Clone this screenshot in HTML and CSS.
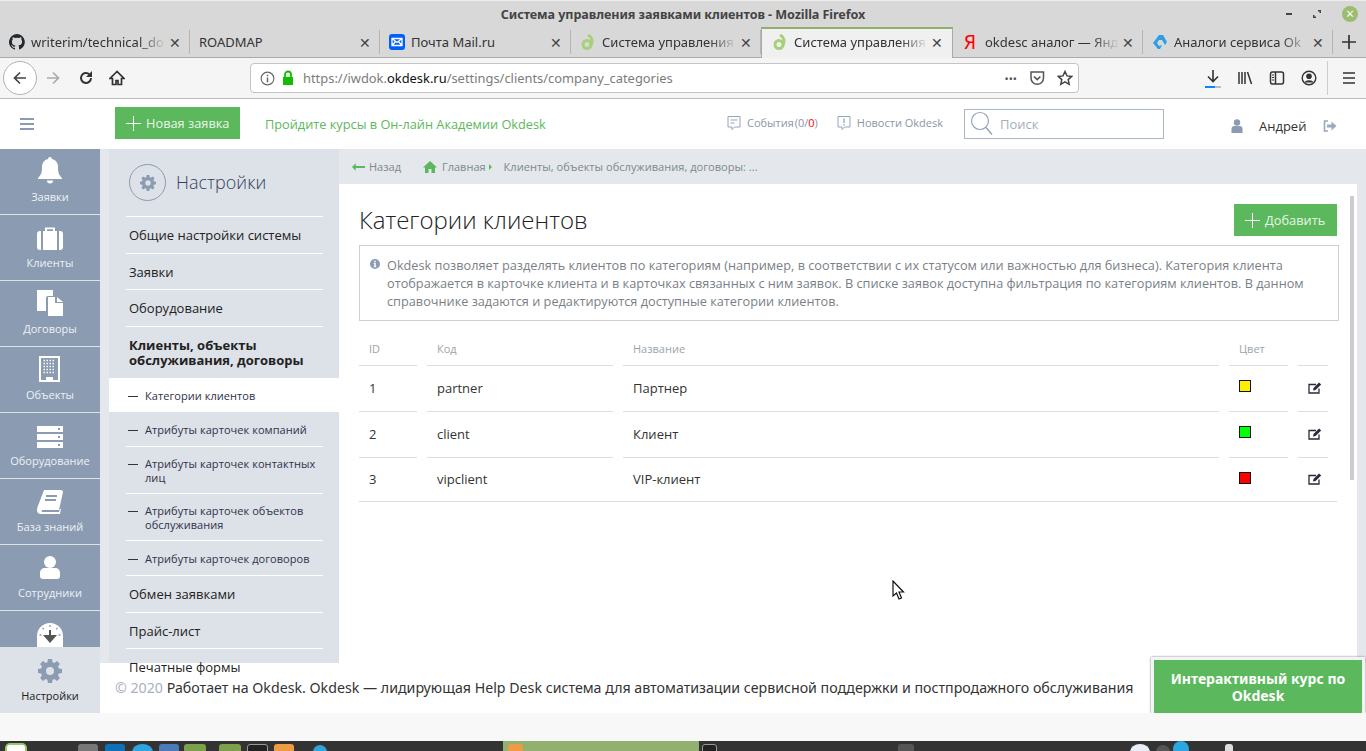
FILE: index.html
```html
<!DOCTYPE html>
<html lang="ru">
<head>
  <meta charset="UTF-8" />
  <meta name="viewport" content="width=device-width, initial-scale=1.0"/>
  <title>Система управления заявками клиентов</title>
  <link rel="stylesheet" href="styles.css">
</head>
<body>
  <svg class="defs" width="0" height="0">
    <defs>
      <g id="okdesk-logo" fill="none" stroke="#a8cf7a" stroke-width="3">
        <circle cx="7" cy="10.5" r="4"/>
        <path d="M8 1c4 2 5 6 3 10"/>
      </g>
      <path id="gear" fill="#8a9bb2" fill-rule="evenodd" d="M10 0h4l.6 3.200 1.800.8L19.100 2.100 21.900 4.900 20 7.600l.8 1.800L24 10v4l-3.200.6-.8 1.800 1.900 2.700-2.800 2.800L16.400 20l-1.800.8L14 24h-4l-.6-3.200-1.800-.8-2.700 1.900-2.800-2.800L4 16.400l-.8-1.800L0 14v-4l3.200-.6.8-1.800L2.100 4.900 4.900 2.100 7.600 4l1.800-.8zM12 8a4 4 0 1 0 0 8 4 4 0 0 0 0-8z"/>
      <g id="edit">
        <path d="M11 6.500V11H1V2.500h7" fill="none" stroke="#2a2a3a" stroke-width="1.300"/>
        <path d="M5 8.500l.5-2.500L11 .5l2.200 2L7.500 8z" fill="#2a2a3a"/>
      </g>
    </defs>
  </svg>

  <!-- browser window chrome -->
  <div class="titlebar">
    <span class="titlebar-text">Система управления заявками клиентов - Mozilla Firefox</span>
    <div class="win-buttons">
      <span class="win-min"></span>
      <svg width="10" height="10" viewBox="0 0 10 10"><path d="M1 9V6h1.500v1.500H4V9zM9 1v3H7.500V2.500H6V1z" fill="#444"/></svg>
      <span class="win-close">×</span>
    </div>
  </div>

  <div class="tabs">
    <div class="tab">
      <svg class="tab-icon" viewBox="0 0 16 16"><path fill="#24292e" d="M8 0a8 8 0 0 0-2.500 15.600c.4.100.5-.2.500-.4v-1.400c-2.200.5-2.700-1-2.700-1-.4-.9-.9-1.200-.9-1.200-.7-.5.100-.5.100-.5.800.1 1.200.8 1.200.8.700 1.200 1.900.9 2.300.7.100-.5.300-.9.500-1.100-1.800-.2-3.600-.9-3.600-4 0-.9.300-1.600.8-2.100-.1-.2-.4-1 .1-2.100 0 0 .7-.2 2.200.8a7.600 7.600 0 0 1 4 0c1.500-1 2.200-.8 2.200-.8.400 1.100.2 1.900.1 2.100.5.600.8 1.300.8 2.100 0 3.100-1.900 3.700-3.700 3.900.3.300.6.800.6 1.500v2.200c0 .2.100.5.600.4A8 8 0 0 0 8 0z"/></svg>
      <span class="tab-title">writerim/technical_do</span><span class="tab-x">✕</span>
    </div>
    <div class="tab">
      <span class="tab-title tab-plain">ROADMAP</span><span class="tab-x">✕</span>
    </div>
    <div class="tab tab-wide">
      <svg class="tab-icon" viewBox="0 0 16 16"><rect width="16" height="16" rx="3" fill="#005ff9"/><path d="M3 4.500h10v7H3zM3 4.500l5 4 5-4M3 11.500l3.500-4M13 11.500l-3.500-4" fill="none" stroke="#fff" stroke-width="1.300"/></svg>
      <span class="tab-title tab-plain">Почта Mail.ru</span><span class="tab-x">✕</span>
    </div>
    <div class="tab">
      <svg class="tab-icon" viewBox="0 0 16 16"><use href="#okdesk-logo"/></svg>
      <span class="tab-title">Система управления</span><span class="tab-x">✕</span>
    </div>
    <div class="tab tab-active">
      <svg class="tab-icon" viewBox="0 0 16 16"><use href="#okdesk-logo"/></svg>
      <span class="tab-title">Система управления</span><span class="tab-x">✕</span>
    </div>
    <div class="tab">
      <span class="tab-ya">Я</span>
      <span class="tab-title">okdesc аналог — Янд</span><span class="tab-x">✕</span>
    </div>
    <div class="tab">
      <svg class="tab-icon" viewBox="0 0 16 16"><path d="M7 1h4l4 7-2 3-3-5H7L5 9l2 3 3-1-2 4-2 0-5-6z" fill="#2c9fe5"/></svg>
      <span class="tab-title">Аналоги сервиса Ok</span><span class="tab-x">✕</span>
    </div>
    <svg class="tab-new" viewBox="0 0 14 14" width="14" height="14"><path d="M7 0v14M0 7h14" stroke="#333" stroke-width="1.700"/></svg>
  </div>

  <div class="toolbar">
    <button class="nav-back">
      <svg width="16" height="16" viewBox="0 0 16 16"><path d="M14 8H2.500M8 2.500L2.500 8 8 13.500" fill="none" stroke="#444" stroke-width="1.700"/></svg>
    </button>
    <svg class="nav-icon nav-fwd" viewBox="0 0 16 16"><path d="M2 8h11.500M8 2.500L13.500 8 8 13.500" fill="none" stroke="#aaa" stroke-width="1.700"/></svg>
    <svg class="nav-icon nav-reload" viewBox="0 0 16 16"><path d="M13 8a5 5 0 1 1-1.700-3.800" fill="none" stroke="#333" stroke-width="2"/><path d="M14 1v6H8z" fill="#333"/></svg>
    <svg class="nav-icon nav-home" viewBox="0 0 16 16"><path d="M8 1.500L1 8.500h2.500V14.500h3.500v-4h2v4h3.500V8.500H15z" fill="none" stroke="#333" stroke-width="1.700"/></svg>
    <div class="urlbar">
      <svg class="url-info" viewBox="0 0 16 16"><circle cx="8" cy="8" r="6.800" fill="none" stroke="#666" stroke-width="1.200"/><path d="M8 7v5M8 4v1.600" stroke="#666" stroke-width="1.600"/></svg>
      <svg class="url-lock" viewBox="0 0 12 16"><path d="M3 7V4.500a3 3 0 0 1 6 0V7" fill="none" stroke="#12bc00" stroke-width="1.800"/><rect x="1" y="7" width="10" height="8" fill="#12bc00"/></svg>
      <span class="url-text">https://iwdok.<b>okdesk.ru</b>/settings/clients/company_categories</span>
      <span class="url-dots">•••</span>
      <svg class="url-icon" viewBox="0 0 16 16"><path d="M2 2h12.500v6a6.250 6.250 0 0 1-12.500 0z" fill="none" stroke="#555" stroke-width="1.500"/><path d="M5 6.500l3.200 3 3.200-3" fill="none" stroke="#555" stroke-width="1.700"/></svg>
      <svg class="url-icon url-star" viewBox="0 0 16 16"><path d="M8 1.500l2 4.400 4.700.5-3.500 3.200 1 4.700L8 11.900l-4.200 2.400 1-4.700L1.300 6.400 6 5.900z" fill="none" stroke="#444" stroke-width="1.500"/></svg>
    </div>
    <div class="tool-right">
      <div class="tool-download">
        <svg viewBox="0 0 16 16" width="16" height="16"><path d="M8 1v11M3 7.500L8 12.500l5-5" fill="none" stroke="#333" stroke-width="1.600"/></svg>
        <span class="tool-progress"></span>
      </div>
      <svg class="tool-icon" viewBox="0 0 16 16"><path d="M2 2v12M5 2v12M8 2v12M10.500 2l4 12" stroke="#333" stroke-width="1.500" fill="none"/></svg>
      <svg class="tool-icon" viewBox="0 0 16 16"><rect x="1.500" y="2" width="13" height="12" rx="2" fill="none" stroke="#333" stroke-width="1.500"/><path d="M6.500 2v12" stroke="#333" stroke-width="1.500"/><path d="M3 5h2M3 7.500h2M3 10h2" stroke="#333"/></svg>
      <svg class="tool-icon" viewBox="0 0 16 16"><circle cx="8" cy="8" r="6.800" fill="none" stroke="#333" stroke-width="1.400"/><circle cx="8" cy="6.300" r="2.800" fill="#333"/><path d="M3.500 12.500c1-3 8-3 9 0z" fill="#333"/></svg>
      <span class="tool-sep"></span>
      <svg class="tool-icon tool-menu" viewBox="0 0 16 16"><path d="M2 3h12M2 8h12M2 13h12" stroke="#333" stroke-width="1.600"/></svg>
    </div>
  </div>

  <!-- okdesk page -->
  <div class="page">
    <header class="topbar">
      <div class="burger"><span></span><span></span><span></span></div>
      <a class="btn btn-new"><span class="plus"></span>Новая заявка</a>
      <a class="academy">Пройдите курсы в Он-лайн Академии Okdesk</a>
      <div class="top-links">
        <span class="top-link top-events">
          <svg viewBox="0 0 14 16" width="14" height="16"><path d="M1 1.500h12v10.500H7.500L5 14.500V12H1z" fill="none" stroke="#93a5bb"/><path d="M3.500 5h7M3.500 8h4" stroke="#93a5bb"/></svg>
          <span>События (0/<em>0</em>)</span>
        </span>
        <span class="top-link">
          <svg viewBox="0 0 14 16" width="14" height="16"><path d="M1 1.500h12v10.500H7.500L5 14.500V12H1z" fill="none" stroke="#93a5bb"/><path d="M7 3.500v4.500M7 9v1.500" stroke="#93a5bb" stroke-width="1.300"/></svg>
          <span>Новости Okdesk</span>
        </span>
      </div>
      <div class="search">
        <svg viewBox="0 0 24 26" width="24" height="26"><circle cx="10" cy="10" r="8.500" fill="none" stroke="#93a5bb" stroke-width="1.200"/><path d="M16 16.500l6 7" stroke="#93a5bb" stroke-width="1.500"/></svg>
        <span>Поиск</span>
      </div>
      <div class="user">
        <svg viewBox="0 0 12 14" width="12" height="14"><circle cx="6" cy="3.500" r="3.200" fill="#8a9bb2"/><path d="M.5 14V10a3 3 0 0 1 3-3h5a3 3 0 0 1 3 3v4z" fill="#8a9bb2"/></svg>
        <span class="user-name">Андрей</span>
        <svg viewBox="0 0 14 12" width="14" height="12"><path d="M5 1H1.500v10H5" fill="none" stroke="#9aa9bc" stroke-width="1.600"/><path d="M4 4.500h4.500V1.500L13.500 6l-5 4.500v-3H4z" fill="#9aa9bc"/></svg>
      </div>
    </header>

    <div class="workspace">
      <nav class="rail">
        <div class="rail-items">
          <a class="rail-item">
            <svg viewBox="0 0 26 28" width="26" height="28"><path d="M13 1a2 2 0 0 1 2 2c4 1 6 4 6 8 0 6 1 8 4 11v1H1v-1c3-3 4-5 4-11 0-4 2-7 6-8a2 2 0 0 1 2-2z" fill="#fff"/><path d="M10 24.500a3 3 0 0 0 6 0z" fill="#fff"/></svg>
            <span>Заявки</span>
          </a>
          <a class="rail-item">
            <svg viewBox="0 0 26 24" width="26" height="24"><path d="M0 8a3 3 0 0 1 3-3h1v19H3a3 3 0 0 1-3-3zM6 5h2V1.500h10V5h2v19H6zM10 5h6V3.300h-6zM22 5h1a3 3 0 0 1 3 3v13a3 3 0 0 1-3 3h-1z" fill="#fff"/></svg>
            <span>Клиенты</span>
          </a>
          <a class="rail-item">
            <svg viewBox="0 0 26 26" width="26" height="26"><path d="M0 0h16v6H11a2 2 0 0 0-2 2v13H0z" fill="#fff"/><path d="M11 7h7v6h8v13H11z" fill="#fff"/><path d="M20 7l6 5h-6z" fill="#fff"/></svg>
            <span>Договоры</span>
          </a>
          <a class="rail-item">
            <svg viewBox="0 0 22 26" width="22" height="26"><path fill-rule="evenodd" d="M0 0h21v26H0zM2 2v22h5v-3h7v3h5V2z" fill="#fff"/><path d="M4.500 4.500h12M4.500 7.500h12M4.500 10.500h12M4.500 13.500h12M4.500 16.500h12" stroke="#fff" stroke-width="1.500" stroke-dasharray="1.500 1.500"/></svg>
            <span>Объекты</span>
          </a>
          <a class="rail-item">
            <svg viewBox="0 0 26 22" width="26" height="22"><path fill-rule="evenodd" d="M0 0h26v6H0zM0 8h26v6H0zM0 16h26v6H0zM21 2v2h2V2zM21 10v2h2v-2zM21 18v2h2v-2z" fill="#fff"/></svg>
            <span>Оборудование</span>
          </a>
          <a class="rail-item">
            <svg viewBox="0 0 26 24" width="26" height="24"><path fill-rule="evenodd" d="M7 0h17a2 2 0 0 1 2 2l-4 18H5a2 2 0 0 0 0 2h17l1-3 1 0-1 5H4a4 4 0 0 1-4-4c0-1 .3-2 .5-3zM9 5v2h11V5zM8 9v2h11V9z" fill="#fff"/></svg>
            <span>База знаний</span>
          </a>
          <a class="rail-item">
            <svg viewBox="0 0 20 24" width="20" height="24"><circle cx="10" cy="6" r="6" fill="#fff"/><path d="M0 20v-3c0-3 2-5 5-5h10c3 0 5 2 5 5v3c0 2-1 3-3 3H3c-2 0-3-1-3-3z" fill="#fff"/></svg>
            <span>Сотрудники</span>
          </a>
          <a class="rail-item rail-gauge">
            <svg viewBox="0 0 26 24" width="26" height="24"><path d="M0 13a13 13 0 0 1 26 0v11H0z" fill="#fff"/><path d="M13 2v2M5.500 5l1.400 1.400M20.500 5l-1.400 1.400M2.500 12h2M21.500 12h2" stroke="#8a9bb2" stroke-width="1.300"/><path d="M12 7h2v5h6l-7 8-7-8h6z" fill="#555"/></svg>
          </a>
        </div>
        <a class="rail-item rail-settings">
          <svg viewBox="0 0 24 24" width="24" height="24"><use href="#gear"/></svg>
          <span>Настройки</span>
        </a>
      </nav>

      <aside class="settings">
        <div class="settings-head">
          <div class="settings-badge">
            <svg viewBox="0 0 24 24" width="16" height="16"><use href="#gear"/></svg>
          </div>
          <span class="settings-title">Настройки</span>
        </div>
        <ul class="settings-list">
          <li class="menu-item">Общие настройки системы</li>
          <li class="menu-item">Заявки</li>
          <li class="menu-item">Оборудование</li>
          <li class="menu-item menu-open">Клиенты, объекты обслуживания, договоры</li>
          <li class="sub-item sub-single sub-current">Категории клиентов</li>
          <li class="sub-item sub-single">Атрибуты карточек компаний</li>
          <li class="sub-item">Атрибуты карточек контактных лиц</li>
          <li class="sub-item">Атрибуты карточек объектов обслуживания</li>
          <li class="sub-item sub-single sub-last">Атрибуты карточек договоров</li>
          <li class="menu-item">Обмен заявками</li>
          <li class="menu-item">Прайс-лист</li>
          <li class="menu-item">Печатные формы</li>
        </ul>
      </aside>

      <main class="main">
        <div class="crumbs">
          <svg viewBox="0 0 14 8" width="13" height="8"><path d="M0 4l4-4v3h10v2H4v3z" fill="#5cb85c"/></svg>
          <span class="crumb-back">Назад</span>
          <svg class="crumb-home" viewBox="0 0 14 12" width="14" height="12"><path d="M7 0l7 6.500h-2V12H8.500V8h-3v4H2V6.500H0z" fill="#5cb85c"/></svg>
          <span>Главная</span>
          <i class="crumb-arrow"></i>
          <span class="crumb-path">Клиенты, объекты обслуживания, договоры: ...</span>
        </div>
        <div class="content">
          <div class="content-head">
            <h1>Категории клиентов</h1>
            <a class="btn btn-add"><span class="plus"></span>Добавить</a>
          </div>
          <div class="note">
            <svg viewBox="0 0 10 10" width="10" height="10"><path fill-rule="evenodd" d="M5 0a5 5 0 1 1 0 10A5 5 0 0 1 5 0zM4.200 1.700v1.500h1.600V1.700zM3.700 4v1h.6v2.300h-.6v1h2.600v-1h-.5V4z" fill="#8a9bb2"/></svg>
            <p>Okdesk позволяет разделять клиентов по категориям (например, в соответствии с их статусом или важностью для бизнеса). Категория клиента отображается в карточке клиента и в карточках связанных с ним заявок. В списке заявок доступна фильтрация по категориям клиентов. В данном справочнике задаются и редактируются доступные категории клиентов.</p>
          </div>
          <div class="grid-wrap">
            <table class="grid">
              <thead>
                <tr><th class="col-id">ID</th><th class="col-code">Код</th><th class="col-name">Название</th><th class="col-color">Цвет</th><th class="col-edit"></th></tr>
              </thead>
              <tbody>
                <tr>
                  <td>1</td><td>partner</td><td>Партнер</td>
                  <td><span class="swatch swatch-yellow"></span></td>
                  <td><svg class="edit" viewBox="0 0 14 12"><use href="#edit"/></svg></td>
                </tr>
                <tr>
                  <td>2</td><td>client</td><td>Клиент</td>
                  <td><span class="swatch swatch-green"></span></td>
                  <td><svg class="edit" viewBox="0 0 14 12"><use href="#edit"/></svg></td>
                </tr>
                <tr class="row-last">
                  <td>3</td><td>vipclient</td><td>VIP-клиент</td>
                  <td><span class="swatch swatch-red"></span></td>
                  <td><svg class="edit" viewBox="0 0 14 12"><use href="#edit"/></svg></td>
                </tr>
              </tbody>
            </table>
          </div>
        </div>
        <div class="scroller"><span></span></div>
      </main>

      <footer class="foot">© 2020 <span>Работает на Okdesk. Okdesk — лидирующая Help Desk система для автоматизации сервисной поддержки и постпродажного обслуживания</span></footer>
    </div>

    <a class="course">Интерактивный курс по Okdesk</a>

    <svg class="cursor" viewBox="0 0 14 20" width="14" height="20"><path d="M1 1v15l3.500-3 2.500 6 2.500-1-2.500-6h4.500z" fill="#fff" stroke="#111" stroke-width="1.200"/></svg>
  </div>

  <div class="strip"></div>

  <div class="taskbar">
    <span class="task-mint"></span>
    <span class="task-app task-gray"></span>
    <span class="task-app task-vscode"></span>
    <span class="task-app task-tg"></span>
    <span class="task-app task-blue"></span>
    <span class="task-app task-greenbox"></span>
    <span class="task-app task-folder"></span>
    <span class="task-app task-term"></span>
    <span class="task-app task-orange"></span>
    <span class="task-dot task-tgwin"></span>
    <div class="task-window"><span class="task-app task-orange"></span></div>
    <span class="task-app task-term task-termwin"></span>
    <span class="task-app task-fox"></span>
    <span class="task-app task-shield"></span>
    <span class="task-dot task-graydot"></span>
    <span class="task-dot task-bluedot"></span>
    <span class="task-app task-batt"></span>
  </div>
</body>
</html>
```

FILE: styles.css
```css
* {
  box-sizing: border-box;
}
html, body {
  margin: 0;
  height: 751px;
  overflow: hidden;
}
body {
  font-family: 'Open Sans', sans-serif;
  background: #f8f8f8;
  color: #333;
}
.defs {
  display: block;
  height: 0;
}

/* browser chrome */
.titlebar {
  height: 27px;
  background: #d8d8d8;
  display: flex;
  align-items: center;
  justify-content: center;
  position: relative;
  border-top: 1px solid #eee;
}
.titlebar-text {
  font-family: 'Noto Sans', sans-serif;
  font-size: 12.6px;
  font-weight: 700;
  color: #444;
  letter-spacing: -0.08px;
}
.win-buttons {
  position: absolute;
  right: 8px;
  top: 0;
  height: 26px;
  display: flex;
  align-items: center;
  gap: 20px;
}
.win-min {
  width: 6px;
  height: 2px;
  background: #444;
}
.win-close {
  width: 16px;
  height: 16px;
  border-radius: 50%;
  background: #9cbd6f;
  color: #fff;
  font-size: 14px;
  line-height: 16px;
  text-align: center;
}
.tabs {
  height: 31px;
  background: #d8d8d8;
  display: flex;
  align-items: flex-start;
  border-bottom: 1px solid #aaa;
  font-family: 'Noto Sans', sans-serif;
  font-size: 13px;
  color: #333;
}
.tab {
  flex: none;
  width: 190px;
  height: 30px;
  display: flex;
  align-items: center;
  padding: 0 6px 0 9px;
  position: relative;
}
.tab-wide {
  width: 191px;
}
.tab::after {
  content: "";
  position: absolute;
  right: 0;
  top: 3px;
  bottom: 3px;
  width: 1px;
  background: #b4b4b4;
}
.tab-active {
  width: 192px;
  height: 31px;
  padding-left: 10px;
  padding-bottom: 3px;
  background: #f0f0f0;
  border-top: 2px solid #8fb069;
  border-left: 1px solid #aaa;
  border-right: 1px solid #aaa;
}
.tab-active::after {
  display: none;
}
.tab-icon {
  width: 16px;
  height: 16px;
  flex: none;
  margin-right: 6px;
}
.tab-title {
  flex: 1;
  overflow: hidden;
  white-space: nowrap;
  -webkit-mask-image: linear-gradient(to right, #000 80%, transparent 100%);
  mask-image: linear-gradient(to right, #000 80%, transparent 100%);
}
.tab-plain {
  -webkit-mask-image: none;
  mask-image: none;
}
.tab-x {
  flex: none;
  width: 18px;
  text-align: center;
  font-size: 14px;
  color: #444;
}
.tab-ya {
  flex: none;
  width: 12px;
  margin: 0 9px 0 2px;
  color: #f00;
  font-size: 19px;
  line-height: 1;
  text-align: center;
}
.tab-new {
  flex: none;
  margin: 8px 0 0 9px;
}
.toolbar {
  height: 41px;
  background: #f5f5f5;
  border-bottom: 1px solid #bbb;
  display: flex;
  align-items: center;
  padding-left: 3px;
}
.nav-back {
  width: 34px;
  height: 34px;
  flex: none;
  border: 1px solid #b4b4b4;
  border-radius: 50%;
  background: #fff;
  padding: 0;
  display: flex;
  align-items: center;
  justify-content: center;
}
.nav-icon {
  width: 16px;
  height: 16px;
  flex: none;
}
.nav-fwd {
  margin-left: 8px;
}
.nav-reload {
  margin-left: 17px;
}
.nav-home {
  margin-left: 15px;
}
.urlbar {
  width: 829px;
  height: 30px;
  margin-left: 125px;
  background: #fff;
  border: 1px solid #c4c4c4;
  border-radius: 4px;
  display: flex;
  align-items: center;
  padding: 0 5px 0 9px;
  font-family: 'Noto Sans', sans-serif;
  font-size: 12.9px;
  color: #7c7c7c;
}
.url-info {
  width: 15px;
  height: 15px;
  flex: none;
}
.url-lock {
  width: 12px;
  height: 16px;
  margin-left: 7px;
  flex: none;
}
.url-text {
  margin-left: 9px;
  flex: 1;
  white-space: nowrap;
}
.url-text b {
  font-weight: 400;
  color: #111;
}
.url-dots {
  font-size: 11px;
  color: #555;
  margin-right: 12px;
}
.url-icon {
  width: 16px;
  height: 16px;
  flex: none;
}
.url-star {
  margin-left: 12px;
}
.tool-right {
  flex: 1;
  display: flex;
  align-items: center;
  padding-left: 126px;
  gap: 16px;
  height: 100%;
}
.tool-download {
  width: 16px;
  height: 20px;
  position: relative;
}
.tool-progress {
  position: absolute;
  left: 0;
  bottom: 0;
  width: 16px;
  height: 2px;
  background: linear-gradient(to right, #0a84ff 65%, #bbb 65%);
}
.tool-icon {
  width: 16px;
  height: 16px;
  flex: none;
}
.tool-sep {
  width: 1px;
  height: 34px;
  background: #ccc;
  margin-left: -6px;
}
.tool-menu {
  margin-left: -3px;
}

/* page */
.page {
  height: 614px;
  position: relative;
  overflow: hidden;
  background: #fff;
}
.topbar {
  height: 50px;
  display: flex;
  align-items: center;
  background: #fff;
}
.burger {
  width: 14px;
  margin-left: 20px;
  display: flex;
  flex-direction: column;
  gap: 3px;
}
.burger span {
  height: 2px;
  background: #8a9bb2;
}
.btn {
  display: flex;
  align-items: center;
  height: 32px;
  background: #5cb85c;
  color: #e9f6e9;
  font-size: 12.8px;
  padding: 0 11px;
  white-space: nowrap;
}
.btn .plus {
  flex: none;
  width: 15px;
  height: 15px;
  margin-right: 5px;
  background:
    linear-gradient(#fff, #fff) center / 100% 1px no-repeat,
    linear-gradient(#fff, #fff) center / 1px 100% no-repeat;
}
.btn-new {
  margin-left: 81px;
  width: 125px;
  margin-top: -2px;
}
.academy {
  margin-left: 25px;
  font-size: 12.75px;
  color: #5cb85c;
  width: 462px;
}
.top-links {
  display: flex;
  gap: 19px;
  font-size: 11px;
  color: #8a97a8;
  width: 237px;
  margin-top: -3px;
}
.top-link {
  display: flex;
  align-items: center;
  gap: 6px;
}
.top-events span {
  word-spacing: -2px;
}
.top-link em {
  font-style: normal;
  color: #f00;
}
.search {
  width: 200px;
  height: 30px;
  border: 1px solid #a9b7c8;
  display: flex;
  align-items: center;
  gap: 6px;
  padding-left: 5px;
  font-size: 13px;
  color: #a7adb6;
}
.user {
  display: flex;
  align-items: center;
  margin-left: 67px;
  margin-top: 3px;
  font-size: 13px;
  color: #333;
}
.user-name {
  margin: 0 17px 0 16px;
}
.workspace {
  height: 564px;
  display: grid;
  grid-template-columns: 100px 239px 1fr;
  grid-template-rows: 514px 50px;
  background: #fff;
}
.rail {
  grid-row: 1 / 3;
  background: #8a9bb2;
  display: flex;
  flex-direction: column;
}
.rail-items {
  flex: 1;
  overflow: hidden;
}
.rail-item {
  height: 66px;
  display: flex;
  flex-direction: column;
  align-items: center;
  justify-content: flex-end;
  gap: 5px;
  padding-bottom: 10px;
  color: #eef1f5;
  font-size: 11px;
  border-bottom: 1px solid #dde1e8;
}
.rail-gauge {
  justify-content: flex-start;
  padding: 12px 0 0;
}
.rail-settings {
  flex: none;
  background: #dde1e8;
  color: #222;
  border-bottom: none;
}
.settings {
  background: #dde1e8;
  border-left: 9px solid #e4e7ec;
  position: relative;
  height: 514px;
}
.settings-head {
  height: 67px;
  display: flex;
  align-items: center;
  padding-left: 20px;
  font-size: 18px;
  color: #33425c;
  font-weight: 300;
  gap: 10px;
}
.settings-title {
  margin-top: -2px;
}
.settings-badge {
  width: 37px;
  height: 37px;
  border: 1px solid #8a9bb2;
  border-radius: 50%;
  display: flex;
  align-items: center;
  justify-content: center;
}
.settings-list {
  list-style: none;
  margin: 0;
  padding: 0;
}
.menu-item {
  margin: 0 16px 0 17px;
  padding: 10px 3px 8.67px;
  font-size: 13px;
  line-height: 17px;
  color: #222;
  border-top: 1px solid #fff;
}
.menu-open {
  font-weight: 700;
  line-height: 15px;
  padding-top: 11px;
  padding-bottom: 10px;
}
.sub-item {
  padding: 10px 16px 9px 36px;
  font-size: 11px;
  line-height: 14px;
  letter-spacing: 0.06px;
  color: #2d3348;
  position: relative;
}
.sub-single {
  padding: 11px 16px 10px 36px;
}
.sub-last {
  padding-bottom: 9px;
}
.sub-item::before {
  content: "";
  position: absolute;
  left: 19px;
  top: 17px;
  width: 10px;
  height: 1px;
  background: #333;
}
.sub-single::before {
  top: 18px;
}
.sub-item + .sub-item::after {
  content: "";
  position: absolute;
  left: 17px;
  right: 16px;
  top: -1px;
  height: 1px;
  background: #fff;
}
.sub-current + .sub-item::after {
  display: none;
}
.sub-current {
  background: #fff;
  padding-bottom: 9px;
}
.main {
  position: relative;
  height: 514px;
  overflow: hidden;
}
.crumbs {
  height: 35px;
  background: #e4e7ec;
  display: flex;
  align-items: center;
  padding-left: 13px;
  font-size: 11px;
  color: #7c8a8c;
}
.crumb-back {
  margin-left: 4px;
}
.crumb-home {
  margin-left: 22px;
  margin-right: 5px;
}
.crumb-arrow {
  width: 0;
  height: 0;
  margin: 0 12px 0 3px;
  border-left: 3px solid #5cb85c;
  border-top: 3px solid transparent;
  border-bottom: 3px solid transparent;
}
.crumb-path {
  font-size: 11.1px;
}
.content {
  padding: 0 27px 0 20px;
}
.content-head {
  height: 61px;
  display: flex;
  justify-content: space-between;
  padding-top: 20px;
}
.content-head h1 {
  margin: 0;
  font-size: 24px;
  line-height: 32px;
  font-weight: 300;
  color: #222;
}
.btn-add {
  width: 103px;
  margin-right: 2px;
}
.note {
  display: flex;
  gap: 7px;
  border: 1px solid #ccd1d9;
  padding: 10px 10px;
  font-size: 12.73px;
  line-height: 18px;
  color: #7a7f87;
  height: 76px;
}
.note svg {
  flex: none;
  margin-top: 3px;
}
.note p {
  margin: 0;
  width: 945px;
}
.grid-wrap {
  width: 978px;
  border-bottom: 1px solid #ddd;
}
.grid {
  border-collapse: separate;
  border-spacing: 10px 0;
  margin-left: -10px;
  width: 989px;
  table-layout: fixed;
  font-size: 13px;
}
.grid th {
  height: 45px;
  font-size: 11px;
  font-weight: 400;
  color: #9da3ab;
  text-align: left;
  vertical-align: bottom;
  padding: 0 10px 9px;
  border-bottom: 1px solid #ddd;
}
.grid td {
  height: 46px;
  padding: 0 10px 2px;
  color: #333;
  border-bottom: 1px solid #ddd;
}
.col-id {
  width: 58px;
}
.col-code {
  width: 186px;
}
.col-name {
  width: 596px;
}
.col-color {
  width: 59px;
}
.col-edit {
  width: 30px;
}
.grid .row-last td {
  height: 43px;
  border-bottom: none;
}
.swatch {
  display: block;
  width: 12px;
  height: 12px;
  border: 1px solid #111;
  margin-top: -4px;
}
.row-last .swatch {
  margin-top: -2px;
}
.swatch-yellow {
  background: #ffee00;
}
.swatch-green {
  background: #00ff00;
}
.swatch-red {
  background: #ff0000;
}
.edit {
  display: block;
  width: 14px;
  height: 12px;
}
.scroller {
  position: absolute;
  top: 0;
  right: 0;
  width: 16px;
  height: 100%;
  display: flex;
  justify-content: flex-end;
}
.scroller::after {
  content: "";
  width: 9px;
  background: #e4e7ec;
}
.scroller span {
  width: 4px;
  height: 284px;
  margin: 47px 3px 0 0;
  background: #ccc;
}
.foot {
  grid-column: 2 / 4;
  padding: 15px 0 0 15px;
  font-family: 'Noto Sans', sans-serif;
  font-size: 14.2px;
  color: #a9b1bd;
  white-space: nowrap;
  background: #fff;
}
.foot span {
  color: #333;
}
.course {
  position: absolute;
  right: 1px;
  bottom: 0;
  width: 214px;
  height: 56px;
  padding: 10px 10px 0;
  background: #5cb85c;
  border: 3px solid #f3f4f5;
  border-bottom: none;
  box-shadow: 0 0 2px #777;
  color: #fff;
  font-family: 'Noto Sans', sans-serif;
  font-size: 14px;
  font-weight: 700;
  line-height: 17px;
  text-align: center;
}
.cursor {
  position: absolute;
  left: 892px;
  top: 481px;
}

/* bottom */
.strip {
  height: 28px;
  background: #f8f8f8;
}
.taskbar {
  height: 10px;
  background: #333;
  display: flex;
  align-items: flex-start;
  overflow: hidden;
}
.task-mint {
  flex: none;
  width: 22px;
  height: 16px;
  margin: 2px 0 0 5px;
  border: 2px solid #9fc76c;
  border-radius: 5px;
  background: #fff;
}
.task-app {
  display: block;
  flex: none;
  width: 20px;
  height: 16px;
  margin-top: 3px;
  border-radius: 3px;
}
.task-gray {
  background: #777;
  margin-left: 51px;
}
.task-vscode {
  background: #0e70b8;
  margin-left: 7px;
}
.task-tg {
  background: #2ca5e0;
  border-radius: 50%;
  width: 21px;
  margin-left: 7px;
}
.task-blue {
  background: #4a7ab8;
  margin-left: 6px;
}
.task-greenbox {
  background: #7da04c;
  width: 22px;
  margin-left: 5px;
}
.task-folder {
  background: #7da04c;
  width: 22px;
  margin-left: 13px;
}
.task-term {
  background: #222;
  border: 1px solid #999;
  width: 21px;
  margin-left: 6px;
}
.task-orange {
  background: #ef9a45;
  margin-left: 6px;
}
.task-dot {
  flex: none;
  width: 14px;
  height: 14px;
  margin-top: 4px;
  border-radius: 50%;
}
.task-tgwin {
  background: #2ca5e0;
  margin-left: 19px;
}
.task-window {
  flex: none;
  width: 196px;
  height: 10px;
  margin-left: 176px;
  background: #92b06f;
}
.task-window .task-orange {
  width: 15px;
  margin-left: 5px;
}
.task-termwin {
  width: 15px;
  margin-left: 3px;
}
.task-fox {
  width: 16px;
  margin-left: 181px;
  background: #555;
}
.task-shield {
  width: 20px;
  margin-left: 216px;
  background: #e8eef5;
  border-radius: 50% 50% 0 0;
}
.task-graydot {
  background: #555;
  margin-left: 6px;
}
.task-bluedot {
  width: 16px;
  height: 16px;
  margin: 0 0 0 3px;
  background: #2ca5e0;
}
.task-batt {
  width: 8px;
  margin-left: 36px;
  background: #ddd;
}
```
